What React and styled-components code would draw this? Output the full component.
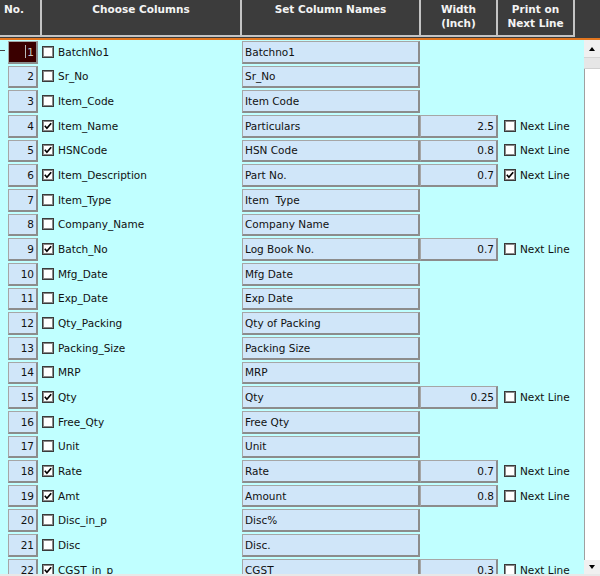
import React from 'react';
import styled, { createGlobalStyle } from 'styled-components';

const Global = createGlobalStyle`
  html, body { margin: 0; padding: 0; background: #c0ffff; }
  body { font-family: "DejaVu Sans", Verdana, sans-serif; }
`;

const Page = styled.div`
  width: 600px;
  height: 576px;
  display: flex;
  flex-direction: column;
  overflow: hidden;
  background: #c0ffff;
`;

const Header = styled.div`
  display: flex;
  height: 38px;
  flex-shrink: 0;
  background: #3c3c3c;
  border-bottom: 2px solid #e2761f;
`;

const HeadCell = styled.div`
  width: ${p => p.$w}px;
  height: 37px;
  box-sizing: border-box;
  border-right: 2px solid #c4c4c4;
  border-bottom: 2px solid #c4c4c4;
  color: #f4f4f4;
  font-weight: bold;
  font-size: 10.5px;
  line-height: 14px;
  padding-top: 2px;
  padding-left: ${p => p.$pl || 0}px;
  text-align: ${p => p.$align || 'center'};
`;

const Body = styled.div`
  display: flex;
  flex: 1;
  min-height: 0;
  overflow: hidden;
`;

const List = styled.div`
  flex: 1;
  display: flex;
  flex-direction: column;
  gap: 2px;
  padding-top: 1px;
`;

const Row = styled.div`
  display: grid;
  grid-template-columns: 8px 30px 204px 178px 78px 1fr;
  height: 22.67px;
  flex-shrink: 0;
  font-size: 10.5px;
  color: #111;
`;

const MarkerCell = styled.div`
  display: flex;
  align-items: center;
  padding-bottom: 4px;
`;

const Marker = styled.div`
  width: 5px;
  height: 1px;
  background: #444;
`;

const Box = styled.div`
  box-sizing: border-box;
  display: flex;
  align-items: center;
  background: #d0e6f9;
  border-top: 1px solid #a6a6a6;
  border-left: 1px solid #a6a6a6;
  border-right: 2px solid #8c8c8c;
  border-bottom: 2px solid #8c8c8c;
  white-space: pre;
  overflow: hidden;
`;

const NoBox = styled(Box)`
  justify-content: flex-end;
  padding-right: 2px;
  background: ${p => (p.$active ? '#3a0000' : '#d0e6f9')};
  color: ${p => (p.$active ? '#c8c8c8' : '#111')};
`;

const Caret = styled.span`
  display: inline-block;
  width: 1px;
  height: 13px;
  margin-right: 1px;
  background: #b8b8b8;
`;

const NameBox = styled(Box)`
  padding-left: 2px;
`;

const WidthBox = styled(Box)`
  justify-content: flex-end;
  padding-right: 2px;
`;

const ChooseCell = styled.div`
  display: flex;
  align-items: center;
  gap: 4px;
  padding-left: 4px;
  padding-bottom: 1px;
`;

const NextCell = styled.div`
  display: flex;
  align-items: center;
  gap: 4px;
  padding-left: 6px;
  padding-bottom: 1px;
`;

const Check = styled.span`
  width: 12px;
  height: 12px;
  box-sizing: border-box;
  flex-shrink: 0;
  background: #fff;
  border: 1px solid #3a3a3a;
  box-shadow: inset 0 0 0 1px #8a8a8a;
  display: flex;
  align-items: center;
  justify-content: center;
`;

const Scroll = styled.div`
  width: 16px;
  flex-shrink: 0;
  display: flex;
  flex-direction: column;
`;

const ScrollBtn = styled.div`
  height: ${p => p.$h}px;
  background: #f0f0f0;
  display: flex;
  align-items: center;
  justify-content: center;
`;

const ArrowUp = styled.span`
  width: 0;
  height: 0;
  border-left: 3.5px solid transparent;
  border-right: 3.5px solid transparent;
  border-bottom: 4px solid #000;
`;

const ArrowDown = styled.span`
  width: 0;
  height: 0;
  border-left: 3.5px solid transparent;
  border-right: 3.5px solid transparent;
  border-top: 4px solid #000;
`;

const Thumb = styled.div`
  height: 10px;
  background: #e6e6e6;
  border-top: 1px solid #d4d4d4;
  border-bottom: 1px solid #d0d0d0;
`;

const Track = styled.div`
  flex: 1;
  background: #fff;
  border-left: 1px solid #a0a0a0;
`;

const BottomStrip = styled.div`
  height: 2px;
  flex-shrink: 0;
  background: #e8e8e8;
`;

const Tick = () => (
  <svg width="8" height="8" viewBox="0 0 8 8">
    <polyline points="0.8,3.8 2.9,6.2 7.2,1.2" fill="none" stroke="#000" strokeWidth="1.7" />
  </svg>
);

const CheckBox = ({ on }) => <Check>{on && <Tick />}</Check>;

const rows = [
  ['BatchNo1', false, 'Batchno1'],
  ['Sr_No', false, 'Sr_No'],
  ['Item_Code', false, 'Item Code'],
  ['Item_Name', true, 'Particulars', '2.5', false],
  ['HSNCode', true, 'HSN Code', '0.8', false],
  ['Item_Description', true, 'Part No.', '0.7', true],
  ['Item_Type', false, 'Item  Type'],
  ['Company_Name', false, 'Company Name'],
  ['Batch_No', true, 'Log Book No.', '0.7', false],
  ['Mfg_Date', false, 'Mfg Date'],
  ['Exp_Date', false, 'Exp Date'],
  ['Qty_Packing', false, 'Qty of Packing'],
  ['Packing_Size', false, 'Packing Size'],
  ['MRP', false, 'MRP'],
  ['Qty', true, 'Qty', '0.25', false],
  ['Free_Qty', false, 'Free Qty'],
  ['Unit', false, 'Unit'],
  ['Rate', true, 'Rate', '0.7', false],
  ['Amt', true, 'Amount', '0.8', false],
  ['Disc_in_p', false, 'Disc%'],
  ['Disc', false, 'Disc.'],
  ['CGST_in_p', true, 'CGST', '0.3', false],
];

export default function App() {
  return (
    <>
      <Global />
      <Page>
        <Header>
          <HeadCell $w={42} $align="left" $pl={4}>No.</HeadCell>
          <HeadCell $w={200}>Choose Columns</HeadCell>
          <HeadCell $w={179}>Set Column Names</HeadCell>
          <HeadCell $w={77}>Width<br />(Inch)</HeadCell>
          <HeadCell $w={77}>Print on<br />Next Line</HeadCell>
        </Header>
        <Body>
          <List>
            {rows.map(([col, on, name, width, next], i) => (
              <Row key={i}>
                <MarkerCell>{i === 0 && <Marker />}</MarkerCell>
                <NoBox $active={i === 0}>
                  {i === 0 && <Caret />}
                  {i + 1}
                </NoBox>
                <ChooseCell>
                  <CheckBox on={on} />
                  <span>{col}</span>
                </ChooseCell>
                <NameBox>{name}</NameBox>
                {width ? <WidthBox>{width}</WidthBox> : <div />}
                {width ? (
                  <NextCell>
                    <CheckBox on={next} />
                    <span>Next Line</span>
                  </NextCell>
                ) : (
                  <div />
                )}
              </Row>
            ))}
          </List>
          <Scroll>
            <ScrollBtn $h={17}><ArrowUp /></ScrollBtn>
            <Thumb />
            <Track />
            <ScrollBtn $h={14}><ArrowDown /></ScrollBtn>
          </Scroll>
        </Body>
        <BottomStrip />
      </Page>
    </>
  );
}
